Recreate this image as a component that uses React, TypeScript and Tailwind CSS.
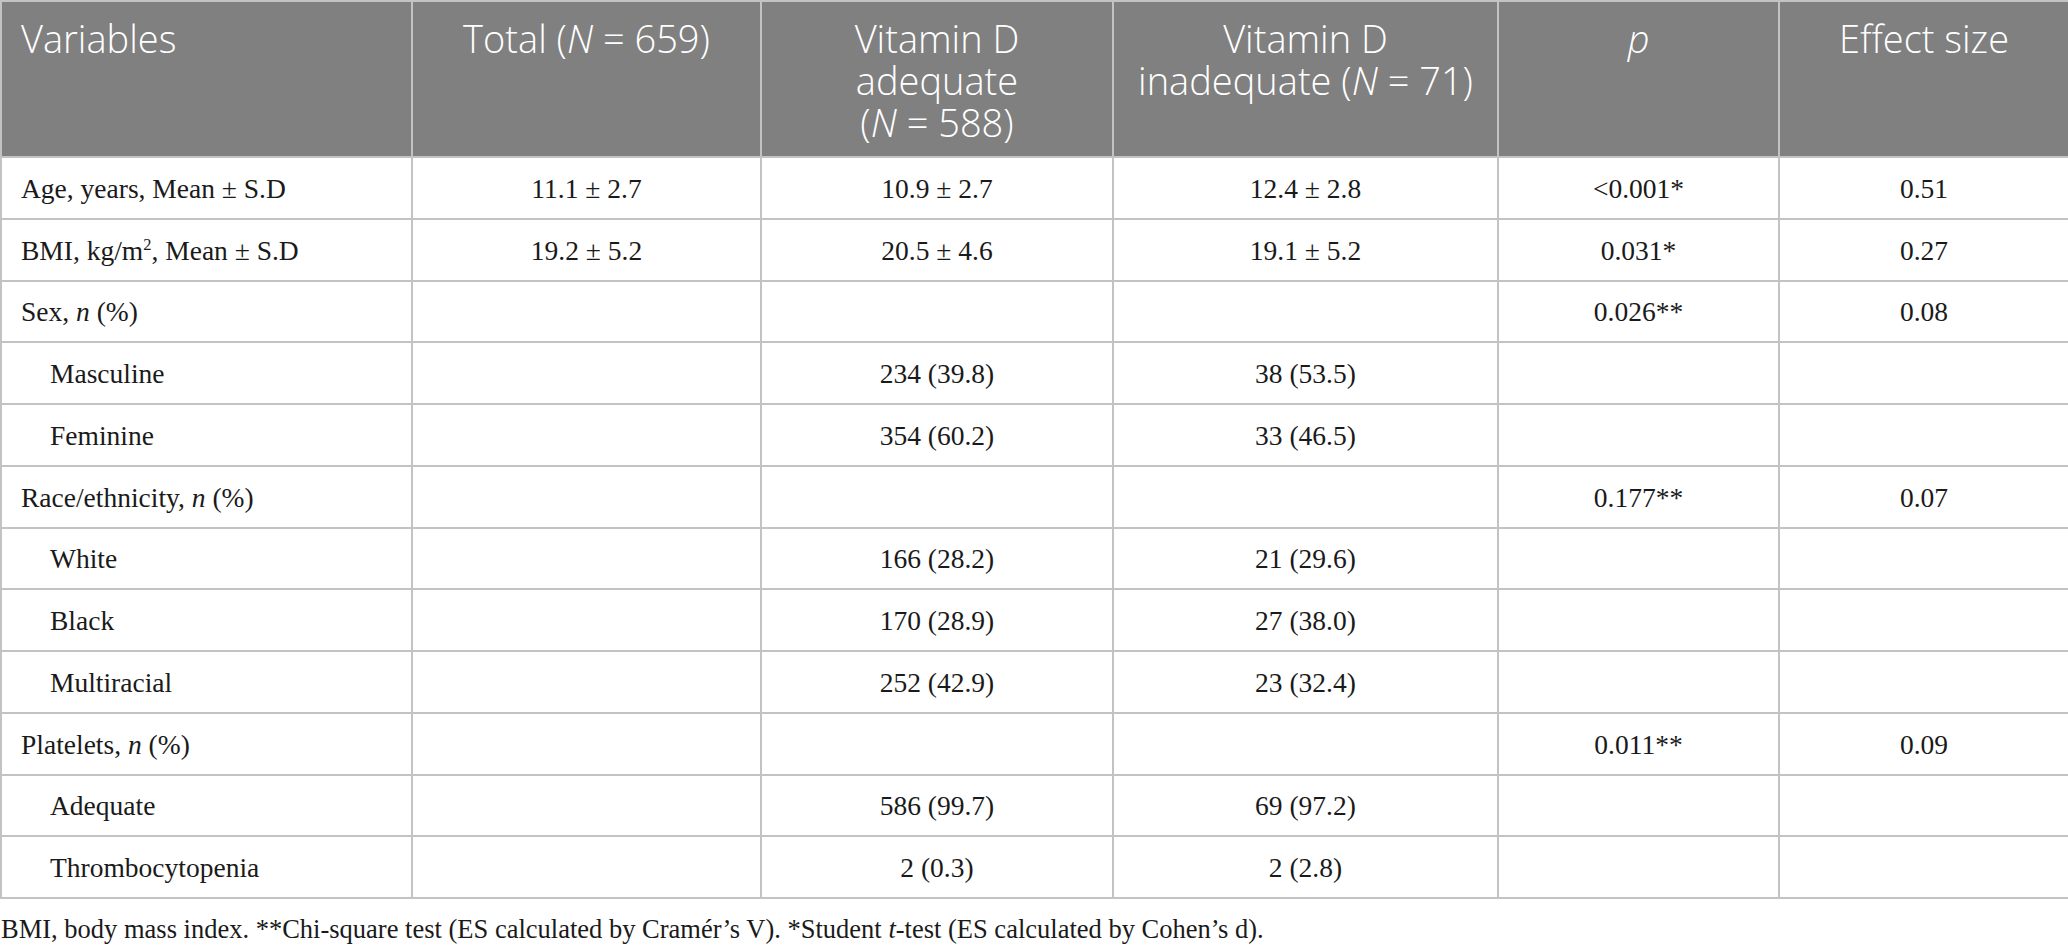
import React from "react";

type Row = { label: React.ReactNode; indent?: boolean; c: string[] };

const rows: Row[] = [
  { label: <>Age, years, Mean ± S.D</>, c: ["11.1 ± 2.7", "10.9 ± 2.7", "12.4 ± 2.8", "<0.001*", "0.51"] },
  { label: <>BMI, kg/m<sup className="text-[0.6em] relative -top-[0.6em]">2</sup>, Mean ± S.D</>, c: ["19.2 ± 5.2", "20.5 ± 4.6", "19.1 ± 5.2", "0.031*", "0.27"] },
  { label: <>Sex, <i>n</i> (%)</>, c: ["", "", "", "0.026**", "0.08"] },
  { label: <>Masculine</>, indent: true, c: ["", "234 (39.8)", "38 (53.5)", "", ""] },
  { label: <>Feminine</>, indent: true, c: ["", "354 (60.2)", "33 (46.5)", "", ""] },
  { label: <>Race/ethnicity, <i>n</i> (%)</>, c: ["", "", "", "0.177**", "0.07"] },
  { label: <>White</>, indent: true, c: ["", "166 (28.2)", "21 (29.6)", "", ""] },
  { label: <>Black</>, indent: true, c: ["", "170 (28.9)", "27 (38.0)", "", ""] },
  { label: <>Multiracial</>, indent: true, c: ["", "252 (42.9)", "23 (32.4)", "", ""] },
  { label: <>Platelets, <i>n</i> (%)</>, c: ["", "", "", "0.011**", "0.09"] },
  { label: <>Adequate</>, indent: true, c: ["", "586 (99.7)", "69 (97.2)", "", ""] },
  { label: <>Thrombocytopenia</>, indent: true, c: ["", "2 (0.3)", "2 (2.8)", "", ""] },
];

export default function App() {
  const th = "border-2 border-[#c3c3c3] align-top pt-[15px] px-[19px] font-light";
  return (
    <div className="w-[2068px] h-[950px] bg-white overflow-hidden">
      <table
        className="w-[2068px] border-collapse table-fixed text-[#1a1a1a]"
        style={{ fontFamily: '"Liberation Serif", serif' }}
      >
        <colgroup>
          <col className="w-[411px]" />
          <col className="w-[349px]" />
          <col className="w-[352px]" />
          <col className="w-[385px]" />
          <col className="w-[281px]" />
          <col className="w-[290px]" />
        </colgroup>
        <thead>
          <tr
            className="h-[156px] bg-[#808080] text-white text-[38px] leading-[42px]"
            style={{ fontFamily: '"Open Sans", "Noto Sans", sans-serif' }}
          >
            <th className={th + " text-left"}>Variables</th>
            <th className={th + " text-center"}>
              Total (<i>N</i> = 659)
            </th>
            <th className={th + " text-center"}>
              Vitamin D<br />adequate<br />(<i>N</i> = 588)
            </th>
            <th className={th + " text-center"}>
              Vitamin D<br />inadequate (<i>N</i> = 71)
            </th>
            <th className={th + " text-center"}>
              <i>p</i>
            </th>
            <th className={th + " text-center"}>Effect size</th>
          </tr>
        </thead>
        <tbody className="text-[27.5px] leading-[32px]">
          {rows.map((r, i) => (
            <tr key={i} className="h-[61.75px]">
              <td
                className={
                  "border-2 border-[#c3c3c3] align-middle pt-[2px] " +
                  (r.indent ? "pl-[48px]" : "pl-[19px]")
                }
              >
                {r.label}
              </td>
              {r.c.map((v, j) => (
                <td key={j} className="border-2 border-[#c3c3c3] text-center align-middle pt-[2px]">
                  {v}
                </td>
              ))}
            </tr>
          ))}
        </tbody>
      </table>
      <p
        className="text-[26.5px] leading-[32px] text-[#1a1a1a] mt-[14px] pl-[1px]"
        style={{ fontFamily: '"Liberation Serif", serif' }}
      >
        BMI, body mass index. **Chi-square test (ES calculated by Cramér’s V). *Student <i>t</i>-test (ES calculated by
        Cohen’s d).
      </p>
    </div>
  );
}
